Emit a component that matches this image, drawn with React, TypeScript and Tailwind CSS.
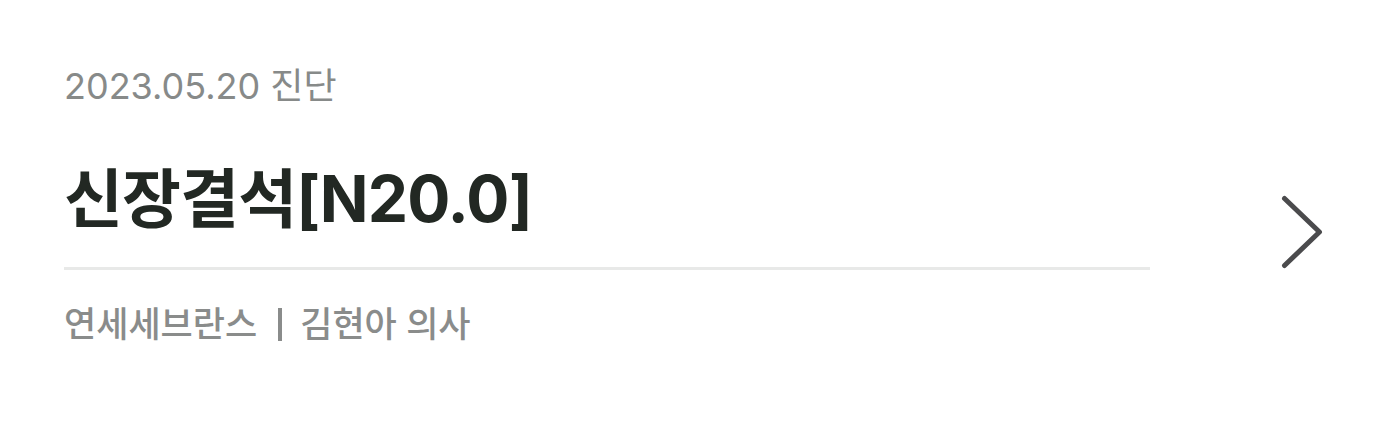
import React from 'react';

const font = { fontFamily: '"Inter", "Noto Sans CJK KR", sans-serif' };

const ChevronRight: React.FC = () => (
  <svg width="44" height="76" viewBox="0 0 44 76" fill="none">
    <polyline
      points="4.5,4.5 39.5,38 4.5,71.5"
      stroke="#4b4b4d"
      strokeWidth="5"
      strokeLinecap="round"
      strokeLinejoin="round"
    />
  </svg>
);

const DiagnosisCard: React.FC = () => {
  return (
    <div className="flex w-full bg-white pl-[64px] pr-[54px] pt-[62px] gap-[130px]" style={font}>
      <div className="flex-1 min-w-0">
        <p className="text-[36px] leading-[48px] text-[#878a89]">2023.05.20 진단</p>
        <h2 className="mt-[47px] text-[64px] leading-[83px] font-bold text-[#222823] tracking-[-0.8px]">
          신장결석[N20.0]
        </h2>
        <div className="mt-[27px] h-[3px] bg-[#e8e9e8]"></div>
        <div className="mt-[30px] flex items-center text-[35px] leading-[48px] text-[#8a8c8b] font-medium">
          <span>연세세브란스</span>
          <span className="ml-[21px] mr-[18px] inline-block w-[4px] h-[33px] bg-[#8a8c8b]"></span>
          <span>김현아 의사</span>
        </div>
      </div>
      <div className="mt-[132px] shrink-0">
        <ChevronRight />
      </div>
    </div>
  );
};

export default function App() {
  return (
    <div className="w-[1378px] h-[422px] bg-white overflow-hidden">
      <DiagnosisCard />
    </div>
  );
}
